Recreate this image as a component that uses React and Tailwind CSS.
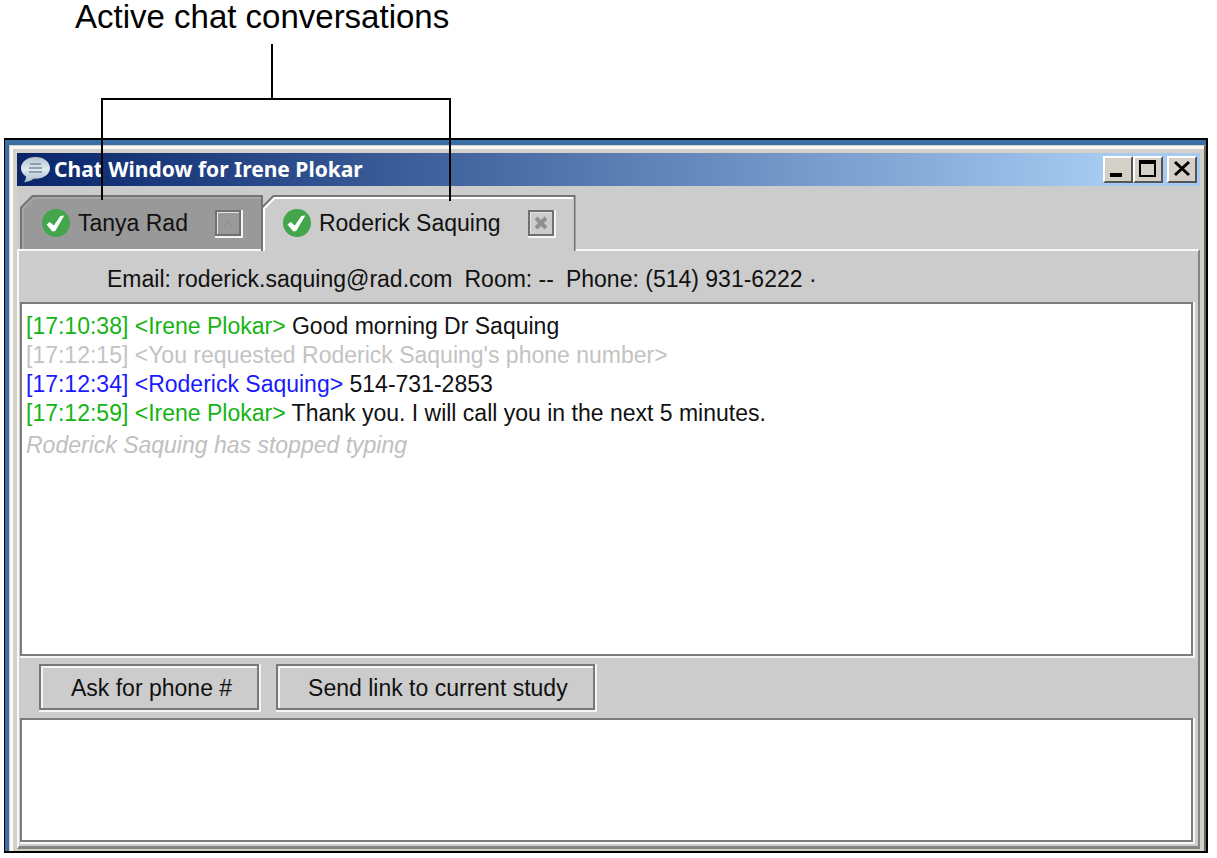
import React, { useState } from 'react';
import clsx from 'clsx';

const tabs = [
  { id: 'tanya', name: 'Tanya Rad' },
  { id: 'roderick', name: 'Roderick Saquing' },
];

const messages = [
  { time: '17:10:38', from: 'Irene Plokar', color: 'text-[#14b414]', text: 'Good morning Dr Saquing' },
  { time: '17:12:15', from: "You requested Roderick Saquing's phone number", color: 'text-[#c3c3c3]', text: '' },
  { time: '17:12:34', from: 'Roderick Saquing', color: 'text-[#1a1aff]', text: '514-731-2853' },
  { time: '17:12:59', from: 'Irene Plokar', color: 'text-[#14b414]', text: 'Thank you. I will call you in the next 5 minutes.' },
];

function BubbleIcon() {
  return (
    <svg className="w-[30px] h-[28px] shrink-0" viewBox="0 0 30 28" aria-hidden="true">
      <defs>
        <linearGradient id="bubble" x1="0" y1="0" x2="0" y2="1">
          <stop offset="0" stopColor="#b4c3cf" />
          <stop offset="0.5" stopColor="#dfe9f0" />
          <stop offset="1" stopColor="#a9bccb" />
        </linearGradient>
      </defs>
      <path
        d="M14.500 1C6.500 1 0 5.800 0 12c0 4 2.200 6.800 5 8.600 0 2.200-.6 3.900-2 5.400 4.200 0 7.500-1.400 9.500-3.200h2C22.500 22.800 29 18.200 29 12S22.500 1 14.500 1z"
        fill="url(#bubble)"
      />
      <path d="M9 8h11M8 12h13M8 16h13" stroke="#7d8a96" strokeWidth="1.600" />
    </svg>
  );
}

function OnlineIcon() {
  return (
    <svg className="w-7 h-7 shrink-0" viewBox="0 0 28 28" aria-hidden="true">
      <circle cx="14" cy="14" r="14" fill="#43a64c" />
      <path d="M4.500 15.500l3.300-2.500 4 3.600 6.500-9.600 4-.6-9 15.600-3 .4z" fill="#fff" />
    </svg>
  );
}

function TitleButton({ label, children }) {
  return (
    <button
      type="button"
      aria-label={label}
      className="w-[30px] h-[27px] bg-[#d4d0c8] border-2 border-t-white border-l-white border-r-[#555] border-b-[#555]"
    >
      <svg className="w-[26px] h-[23px]" viewBox="0 0 26 23" aria-hidden="true">
        {children}
      </svg>
    </button>
  );
}

function TitleBar() {
  return (
    <header className="h-[33px] flex items-center pl-1 pr-[3px] bg-linear-to-r from-[#0a246a] to-[#a6caf0] to-92%">
      <BubbleIcon />
      <h1 className="flex-1 pl-[3px] pb-[2px] font-bold text-[21px] leading-[28px] text-white font-['Noto_Sans',sans-serif]">
        Chat Window for Irene Plokar
      </h1>
      <TitleButton label="Minimize">
        <path d="M5 15h12v4H5z" />
      </TitleButton>
      <TitleButton label="Maximize">
        <path d="M4 2h17v17H4zM6 6v11h13V6z" fillRule="evenodd" />
      </TitleButton>
      <div className="w-1" />
      <TitleButton label="Close">
        <path d="M6 4l14 13M20 4L6 17" stroke="#000" strokeWidth="3" />
      </TitleButton>
    </header>
  );
}

// Tab outline: three stacked fills with the top left corner cut off
function Tab({ name, active, onSelect }) {
  return (
    <div
      className={clsx(
        'pt-[2px] px-[2px] bg-[#757575] [clip-path:polygon(0_12px,12px_0,100%_0,100%_100%,0_100%)]',
        active ? '-mb-[2px] -ml-[2px] relative z-10' : 'h-[54px]'
      )}
    >
      <div
        className={clsx(
          'pt-[2px] pl-[2px] [clip-path:polygon(0_11px,11px_0,100%_0,100%_100%,0_100%)]',
          active ? 'bg-white' : 'bg-[#a6a6a6]'
        )}
      >
        <div
          className={clsx(
            'flex items-center pl-[18px] pr-5 [clip-path:polygon(0_10px,10px_0,100%_0,100%_100%,0_100%)]',
            active ? 'h-[52px] pb-1 bg-[#ccc]' : 'h-[50px] pb-[2px] bg-[#999]'
          )}
        >
          <button
            type="button"
            role="tab"
            aria-selected={active}
            onClick={onSelect}
            className="flex items-center gap-2 text-[23px] leading-[28px]"
          >
            <OnlineIcon />
            {name}
          </button>
          <button
            type="button"
            aria-label={`Close ${name}`}
            className="ml-[27px] w-[26px] h-[26px] border-2 border-[#707070] shadow-[1px_1px_0_1px_#f4f4f4,inset_1px_1px_0_#e4e4e4]"
          >
            <svg className="w-[22px] h-[22px]" viewBox="0 0 22 22" aria-hidden="true">
              {active ? (
                <path d="M6 6l10 10M16 6L6 16" stroke="#8f8f8f" strokeWidth="4" />
              ) : (
                <path d="M7 15l4-6 4 6" stroke="#939393" strokeWidth="2" fill="none" />
              )}
            </svg>
          </button>
        </div>
      </div>
    </div>
  );
}

function ActionButton({ children }) {
  return (
    <button
      type="button"
      className="h-[46px] pl-[30px] pr-[25px] pt-[2px] border-2 border-[#787878] text-[23px] leading-[28px] shadow-[1px_1px_0_1px_#f4f4f4,inset_2px_2px_0_#f4f4f4]"
    >
      {children}
    </button>
  );
}

export default function App() {
  const [current, setCurrent] = useState('roderick');

  return (
    <div className="relative min-h-screen flex flex-col pl-1 pr-[9px] pb-[5px] bg-white text-[#111] font-['Liberation_Sans',Arial,sans-serif]">
      <p className="h-[138px] pl-[71px] text-[33px] leading-[33px] text-black">Active chat conversations</p>

      {/* Window frame */}
      <div className="flex-1 flex flex-col border-black border-l border-t-2 border-r-2 border-b-2 bg-[#3a6ea5] pl-1 pt-[5px]">
        <div className="flex-1 flex flex-col border-t border-l border-r-2 border-t-[#d4d0c8] border-l-[#d4d0c8] border-r-[#666]">
          <div className="flex-1 flex flex-col border-t-[3px] border-l-[3px] border-[#faf8f4]">
            <div className="flex-1 flex flex-col border-t-4 border-x-4 border-b-2 border-[#d4d0c8] bg-[#ccc]">
              <TitleBar />

              <div role="tablist" className="flex items-end pl-[3px] pt-[9px]">
                {tabs.map((tab) => (
                  <Tab
                    key={tab.id}
                    name={tab.name}
                    active={tab.id === current}
                    onSelect={() => setCurrent(tab.id)}
                  />
                ))}
              </div>

              <section className="flex-1 flex flex-col border-t-2 border-l-2 border-r-2 border-b-[3px] border-t-[#f8f8f8] border-l-[#f8f8f8] border-r-[#858585] border-b-[#858585] pl-px pr-[5px] pb-1">
                <div className="h-[51px] flex items-center gap-3 pl-[87px] pt-1 text-[23px] leading-[28px] whitespace-pre">
                  <span>Email: roderick.saquing@rad.com</span>
                  <span>Room: --</span>
                  <span>Phone: (514) 931-6222 ·</span>
                </div>

                <div
                  role="log"
                  className="flex-1 border-2 border-[#7c7c7c] bg-white shadow-[1px_1px_0_1px_#f8f8f8] pl-1 pt-2 text-[23px] leading-[29px]"
                >
                  {messages.map((m) => (
                    <p key={m.time}>
                      <span className={m.color}>
                        [{m.time}] &lt;{m.from}&gt;
                      </span>{' '}
                      {m.text}
                    </p>
                  ))}
                  <p className="pt-[3px] italic text-[#c0c0c0]">Roderick Saquing has stopped typing</p>
                </div>

                <div className="flex gap-[17px] pl-[19px] py-2">
                  <ActionButton>Ask for phone #</ActionButton>
                  <ActionButton>Send link to current study</ActionButton>
                </div>

                <textarea
                  aria-label="Message"
                  className="block w-full h-[124px] resize-none outline-none border-2 border-[#7c7c7c] bg-white shadow-[1px_1px_0_1px_#f8f8f8] px-1 text-[23px] leading-[30px]"
                />
              </section>
            </div>
          </div>
        </div>
      </div>

      {/* Callout bracket over the two tabs */}
      <svg
        className="absolute left-[100px] top-[44px] z-20 w-[352px] h-[158px] pointer-events-none"
        viewBox="0 0 352 158"
        fill="none"
        aria-hidden="true"
      >
        <path d="M172 0v55M2 156V55h348v102" stroke="#000" strokeWidth="2" />
      </svg>
    </div>
  );
}
